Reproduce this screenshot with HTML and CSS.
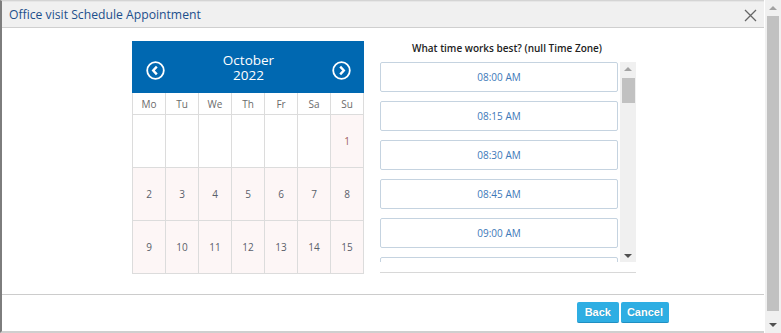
FILE: index.html
```html
<!DOCTYPE html>
<html>
<head>
<meta charset="utf-8">
<link rel="stylesheet" href="styles.css">
</head>
<body>
<div class="screen">
  <div class="dialog">
    <div class="titlebar">
      <span class="title">Office visit Schedule Appointment</span>
      <svg class="close" width="13" height="13" viewBox="0 0 13 13"><path d="M1 1L12 12M12 1L1 12" stroke="#666" stroke-width="1.3" fill="none"/></svg>
    </div>
    <div class="body">
      <div class="calendar">
        <div class="cal-head">
          <svg class="nav" width="19" height="19" viewBox="0 0 19 19"><circle cx="9.5" cy="9.5" r="8.3" stroke="#fff" stroke-width="1.8" fill="none"/><path d="M10.8 5.6L7.2 9.5L10.8 13.4" stroke="#fff" stroke-width="2.4" fill="none"/></svg>
          <div class="month"><div>October</div><div>2022</div></div>
          <svg class="nav" width="19" height="19" viewBox="0 0 19 19"><circle cx="9.5" cy="9.5" r="8.3" stroke="#fff" stroke-width="1.8" fill="none"/><path d="M8.2 5.6L11.8 9.5L8.2 13.4" stroke="#fff" stroke-width="2.4" fill="none"/></svg>
        </div>
        <div class="grid">
          <div class="dow">Mo</div><div class="dow">Tu</div><div class="dow">We</div><div class="dow">Th</div><div class="dow">Fr</div><div class="dow">Sa</div><div class="dow">Su</div>
          <div class="cell"></div><div class="cell"></div><div class="cell"></div><div class="cell"></div><div class="cell"></div><div class="cell"></div><div class="cell day sun">1</div>
          <div class="cell day">2</div><div class="cell day">3</div><div class="cell day">4</div><div class="cell day">5</div><div class="cell day">6</div><div class="cell day">7</div><div class="cell day">8</div>
          <div class="cell day">9</div><div class="cell day">10</div><div class="cell day">11</div><div class="cell day">12</div><div class="cell day">13</div><div class="cell day">14</div><div class="cell day">15</div>
        </div>
      </div>
      <div class="times">
        <div class="times-title">What time works best? (null Time Zone)</div>
        <div class="scroller">
          <div class="slots">
            <div class="slot">08:00 AM</div>
            <div class="slot">08:15 AM</div>
            <div class="slot">08:30 AM</div>
            <div class="slot">08:45 AM</div>
            <div class="slot">09:00 AM</div>
            <div class="slot"></div>
          </div>
          <div class="vbar small">
            <div class="arrow up"></div>
            <div class="track"><div class="thumb"></div></div>
            <div class="arrow down"></div>
          </div>
        </div>
        <div class="times-rule"></div>
      </div>
    </div>
    <div class="footer">
      <button class="btn back">Back</button>
      <button class="btn">Cancel</button>
    </div>
  </div>
  <div class="vbar page">
    <div class="arrow up"></div>
    <div class="track"><div class="thumb"></div></div>
    <div class="arrow down"></div>
  </div>
</div>
</body>
</html>
```

FILE: styles.css
```css
* { box-sizing: border-box; }
html, body { margin: 0; padding: 0; }
body {
  width: 781px;
  height: 333px;
  overflow: hidden;
  font-family: "Open Sans", "Noto Sans", sans-serif;
  background: #fff;
}
.screen {
  display: flex;
  height: 333px;
}
.dialog {
  flex: 1;
  display: flex;
  flex-direction: column;
  border-left: 2px solid #7d7d7d;
  border-top: 1px solid #d4d4d4;
  border-bottom: 2px solid #cfcfcf;
  background: #fff;
}
.titlebar {
  height: 27px;
  background: #f0f0f0;
  border-top: 1px solid #e6e6e6;
  border-bottom: 1px solid #cfcfcf;
  display: flex;
  align-items: center;
  justify-content: space-between;
  padding: 0 7px 0 7px;
}
.title {
  font-size: 12.2px;
  color: #1d4f8c;
}
.close { display: block; margin-top: 1px; }
.body {
  flex: 1;
  display: flex;
  justify-content: center;
  gap: 16px;
  padding: 13px 0 0 2px;
  border-bottom: 1px solid #cccccc;
}
.calendar { width: 232px; }
.cal-head {
  height: 52px;
  background: #0068b1;
  display: flex;
  align-items: center;
  justify-content: space-between;
  padding: 0 13px 0 14px;
}
.nav { display: block; margin-top: 6px; }
.month {
  color: #fff;
  text-align: center;
  font-size: 13.5px;
  line-height: 15px;
  margin-top: 2px;
}
.grid {
  display: grid;
  grid-template-columns: repeat(7, 1fr);
  grid-template-rows: 21px 53px 53px 53px;
  border-left: 1px solid #dcdcdc;
  border-bottom: 1px solid #dcdcdc;
}
.dow, .cell {
  border-right: 1px solid #dcdcdc;
  border-top: 1px solid #dcdcdc;
  display: flex;
  align-items: center;
  justify-content: center;
  font-size: 10px;
}
.dow { color: #6b6b6b; border-top: none; }
.cell { background: #fff; }
.day { background: #fdf6f6; color: #5a5f6a; }
.sun { color: #a0605e; }
.times { width: 256px; }
.times-title {
  font-size: 10px;
  font-weight: 600;
  color: #222;
  text-align: center;
  height: 21px;
  line-height: 15px;
  padding-right: 2px;
}
.scroller {
  height: 200px;
  display: flex;
  overflow: hidden;
}
.slots {
  flex: 1;
  display: flex;
  flex-direction: column;
  gap: 9px;
  padding-right: 2px;
}
.slot {
  flex: 0 0 30px;
  border: 1px solid #c5d3e0;
  border-radius: 2px;
  display: flex;
  align-items: center;
  justify-content: center;
  font-size: 10px;
  color: #3d78b8;
}
.times-rule {
  margin-top: 10px;
  border-top: 1px solid #d8d8d8;
}
.vbar {
  background: #f0f0f0;
  display: flex;
  flex-direction: column;
  align-items: center;
}
.vbar.small { width: 16px; }
.vbar.page { width: 17px; border-left: 1px solid #fff; }
.arrow {
  width: 0; height: 0;
  border-left: 4px solid transparent;
  border-right: 4px solid transparent;
}
.arrow.up { border-bottom: 4px solid #a3a3a3; }
.arrow.down { border-top: 4px solid #505050; }
.track { flex: 1; width: 100%; display: flex; justify-content: center; }
.vbar.small .arrow.up { margin: 5px 0 7px; }
.vbar.small .thumb { width: 13px; height: 25px; background: #c1c1c1; margin-left: 1px; }
.vbar.small .arrow.down { margin: 0 0 4px; }
.vbar.page .arrow.up { margin: 6px 0 6px; }
.vbar.page .track { padding: 0 2px; }
.vbar.page .thumb { width: 13px; height: 295px; background: #c1c1c1; }
.vbar.page .arrow.down { margin: 10px 0 6px; }
.footer {
  height: 36px;
  display: flex;
  justify-content: flex-end;
  align-items: flex-start;
  gap: 2px;
  padding: 7px 95px 0 0;
}
.btn {
  height: 21px;
  border: none;
  border-bottom: 1px solid #1f8fc2;
  border-radius: 2px;
  background: #2eaee3;
  color: #fff;
  font-family: "Liberation Sans", Arial, sans-serif;
  font-weight: bold;
  font-size: 11px;
  padding: 0 6px;
  text-shadow: 0 0 1px rgba(0,0,0,0.2);
}
.btn.back { padding: 0 8px; }
```
